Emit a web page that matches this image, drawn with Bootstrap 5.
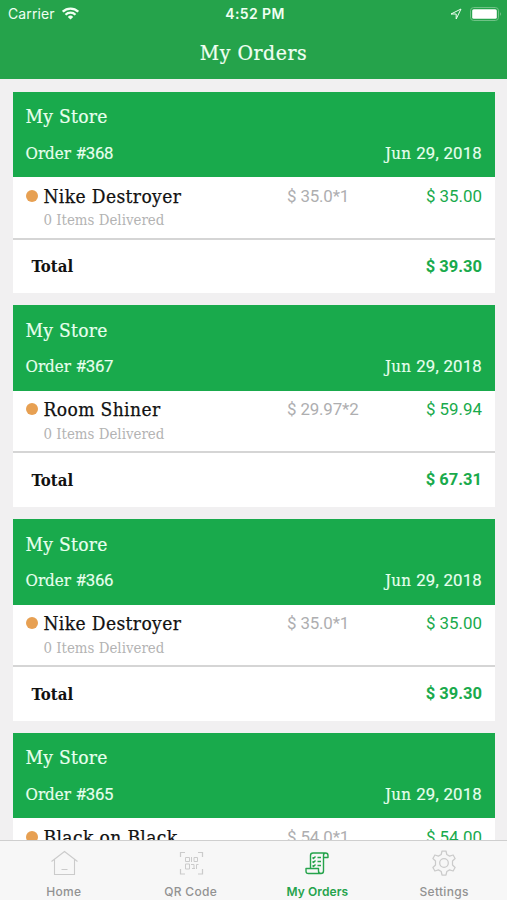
<!DOCTYPE html>
<html lang="en">
<head>
<meta charset="utf-8">
<meta name="viewport" content="width=device-width, initial-scale=1">
<title>My Orders</title>
<link rel="stylesheet" href="https://cdn.jsdelivr.net/npm/bootstrap@5.3.0/dist/css/bootstrap.min.css">
<style>
body{height:900px;overflow:hidden;background:#f1f0f1;font-family:"Roboto Slab","DejaVu Serif Condensed","DejaVu Serif",serif;color:#111}
.num{font-family:"Roboto Slab",Roboto,sans-serif}
.top-area{background:#25a34b;height:79px;color:#f0fff2}
.status-row{height:27px;font-family:Inter,sans-serif;font-size:14px;display:grid;grid-template-columns:1fr auto 1fr;padding:0 5px 0 8px}
.carrier{letter-spacing:.1px}
.carrier-group{gap:7px}
.status-row .clock{font-weight:600;font-size:14px;letter-spacing:.4px}
.page-title{font-size:21px;line-height:53px;letter-spacing:.55px;-webkit-text-stroke:.2px}
.orders{padding:12.5px 12px 0 13px;gap:12px}
.order{height:201.8px;background:#fff}
.order-head{background:#19aa4c;height:85.5px;color:#e8ffee;padding:11.500px 13px 0 12.5px}
.store{font-size:19px;line-height:26px;letter-spacing:.32px;-webkit-text-stroke:.2px}
.meta{font-size:16.8px;line-height:24px;margin-top:11.500px;-webkit-text-stroke:.15px}
.meta .num{font-size:16.8px}
.order-id .num{letter-spacing:-.3px}
.order-date{letter-spacing:.22px}
.item-row{height:62.5px;border-bottom:2px solid #d5d5d5;padding:5.500px 13px 0 12.5px}
.dot{width:12px;height:12px;border-radius:50%;background:#e7a052;margin-right:6px}
.item-name{width:243.5px;font-size:19px;line-height:26px;letter-spacing:.4px;-webkit-text-stroke:.25px}
.qty{font-size:16.9px;line-height:26px;color:#aeaeb0;letter-spacing:-.15px}
.price{font-size:16.9px;line-height:26px;color:#19aa4c}
.delivered{font-size:14.9px;line-height:20px;color:#b3b3b3;padding-left:18px;margin-top:1.500px}
.total-row{height:54px;padding:1px 13px 0 18.5px;font-weight:700;font-size:16.7px}
.total-row .num{font-size:16.5px;color:#19aa4c}
.tabs{height:60px;background:#f7f7f7;border-top:1px solid #cfcfcf;font-family:Inter,sans-serif;font-size:12px;font-weight:500;color:#929292}
.tab{padding:8px 0 0 1px;color:inherit;text-decoration:none}
.tab svg{display:block;color:#cbcbcb}
.tab span{line-height:16px;margin-top:7px;letter-spacing:.3px}
.tab.active,.tab.active svg{color:#25a34b}
.tab.active span{font-weight:600;letter-spacing:.1px}
</style>
<script src="https://cdn.jsdelivr.net/npm/bootstrap@5.3.0/dist/js/bootstrap.bundle.min.js"></script>
</head>
<body class="d-flex flex-column m-0">
<header class="top-area flex-shrink-0">
  <div class="status-row align-items-center">
    <div class="carrier-group d-flex align-items-center"><span class="carrier">Carrier</span>
      <svg width="17" height="13" viewBox="0 0 17 13" fill="none" stroke="currentColor" stroke-width="2.3"><path d="M.8 4.7a11 11 0 0 1 15.4 0M3.5 7.7a7.1 7.1 0 0 1 10 0"/><path d="M8.5 12.6 5.8 9.9a3.9 3.9 0 0 1 5.4 0z" fill="currentColor" stroke="none"/></svg>
    </div>
    <span class="clock">4:52 PM</span>
    <div class="d-flex align-items-center justify-content-end gap-2">
      <svg width="12" height="12" viewBox="0 0 12 12" fill="none" stroke="currentColor"><path d="M1 6 11 1 6.2 11V6z"/></svg>
      <svg width="32" height="14" viewBox="0 0 32 14"><rect x=".5" y=".5" width="28" height="13" rx="3.2" fill="none" stroke="#6fc286"/><rect x="2.2" y="2.2" width="24.6" height="9.6" rx="1.6" fill="#fff"/><path d="M30 5q1.5 2 0 4z" fill="#9bd5aa"/></svg>
    </div>
  </div>
  <div class="page-title text-center">My Orders</div>
</header>
<main class="orders d-flex flex-column flex-grow-1 overflow-hidden">
  <section class="order flex-shrink-0">
    <div class="order-head"><div class="store">My Store</div><div class="meta d-flex justify-content-between"><div class="order-id">Order <span class="num">#368</span></div><div class="order-date">Jun <span class="num">29, 2018</span></div></div></div>
    <div class="item-row"><div class="d-flex align-items-center"><i class="dot"></i><div class="item-name"><span>Nike Destroyer</span></div><div class="qty num">$ 35.0*1</div><div class="price num ms-auto">$ 35.00</div></div><div class="delivered"><span>0 Items Delivered</span></div></div>
    <div class="total-row d-flex align-items-center justify-content-between"><span>Total</span><span class="num">$ 39.30</span></div>
  </section>
  <section class="order flex-shrink-0">
    <div class="order-head"><div class="store">My Store</div><div class="meta d-flex justify-content-between"><div class="order-id">Order <span class="num">#367</span></div><div class="order-date">Jun <span class="num">29, 2018</span></div></div></div>
    <div class="item-row"><div class="d-flex align-items-center"><i class="dot"></i><div class="item-name"><span>Room Shiner</span></div><div class="qty num">$ 29.97*2</div><div class="price num ms-auto">$ 59.94</div></div><div class="delivered"><span>0 Items Delivered</span></div></div>
    <div class="total-row d-flex align-items-center justify-content-between"><span>Total</span><span class="num">$ 67.31</span></div>
  </section>
  <section class="order flex-shrink-0">
    <div class="order-head"><div class="store">My Store</div><div class="meta d-flex justify-content-between"><div class="order-id">Order <span class="num">#366</span></div><div class="order-date">Jun <span class="num">29, 2018</span></div></div></div>
    <div class="item-row"><div class="d-flex align-items-center"><i class="dot"></i><div class="item-name"><span>Nike Destroyer</span></div><div class="qty num">$ 35.0*1</div><div class="price num ms-auto">$ 35.00</div></div><div class="delivered"><span>0 Items Delivered</span></div></div>
    <div class="total-row d-flex align-items-center justify-content-between"><span>Total</span><span class="num">$ 39.30</span></div>
  </section>
  <section class="order flex-shrink-0">
    <div class="order-head"><div class="store">My Store</div><div class="meta d-flex justify-content-between"><div class="order-id">Order <span class="num">#365</span></div><div class="order-date">Jun <span class="num">29, 2018</span></div></div></div>
    <div class="item-row"><div class="d-flex align-items-center"><i class="dot"></i><div class="item-name"><span>Black on Black</span></div><div class="qty num">$ 54.0*1</div><div class="price num ms-auto">$ 54.00</div></div></div>
  </section>
</main>
<nav class="tabs d-flex flex-shrink-0">
  <a class="tab d-flex flex-column align-items-center flex-fill w-25"><svg width="28" height="28" viewBox="0 0 28 28" fill="none" stroke="currentColor" stroke-width="1.1"><path d="M1.500 12.500 14.500 2.500l13 10M4.500 10.500V25.500h20V10.500M11.500 20.500h6"/></svg><span>Home</span></a>
  <a class="tab d-flex flex-column align-items-center flex-fill w-25"><svg width="28" height="28" viewBox="0 0 28 28" fill="none" stroke="currentColor"><path stroke-width="1.2" d="M3.500 8V3.500H8M21 3.500h4.500V8M25.500 20v5H21M8 25H3.500v-5"/><path d="M8.500 8.500h4v4h-4zM8.500 15h4v5h-4zM14.500 8v5M17 8.500h3.500v4H17zM14 15.500h3v4M19.500 20v-4.500h2M15 19.500h3"/></svg><span>QR Code</span></a>
  <a class="tab active d-flex flex-column align-items-center flex-fill w-25"><svg width="28" height="28" viewBox="0 0 28 28" fill="none" stroke="currentColor" stroke-width="1.4" stroke-linejoin="round"><path d="M7.500 19V6.500Q7.500 4 10 4h12.500Q25 4 25 6.500v2h-4.500M22.500 4q-2 0-2 2.500v15.500q0 2.500-2.500 2.500H5.500Q3 24.500 3 22v-2.500h12.500V22q0 2.500 2.500 2.500"/><path d="m9.500 8.500 1 1 2-2M14.500 8.500H18M9.500 12.500l1 1 2-2M14.500 12.500H18M9.500 16.500l1 1 2-2M14.500 16.500H18"/></svg><span>My Orders</span></a>
  <a class="tab d-flex flex-column align-items-center flex-fill w-25"><svg width="28" height="28" viewBox="0 0 28 28" fill="none" stroke="currentColor" stroke-width="1.25" stroke-linejoin="round"><path d="M12 2h4l.8 3.500 2.800 1.600 3.500-1.100 2 3.500-2.600 2.500v4l2.600 2.500-2 3.500-3.500-1.100-2.800 1.600L16 26h-4l-.8-3.500-2.800-1.600L4.900 22l-2-3.500L5.500 16v-4L2.900 9.500l2-3.500 3.500 1.100 2.800-1.600z"/><circle cx="14" cy="14" r="4.300"/></svg><span>Settings</span></a>
</nav>
</body>
</html>
